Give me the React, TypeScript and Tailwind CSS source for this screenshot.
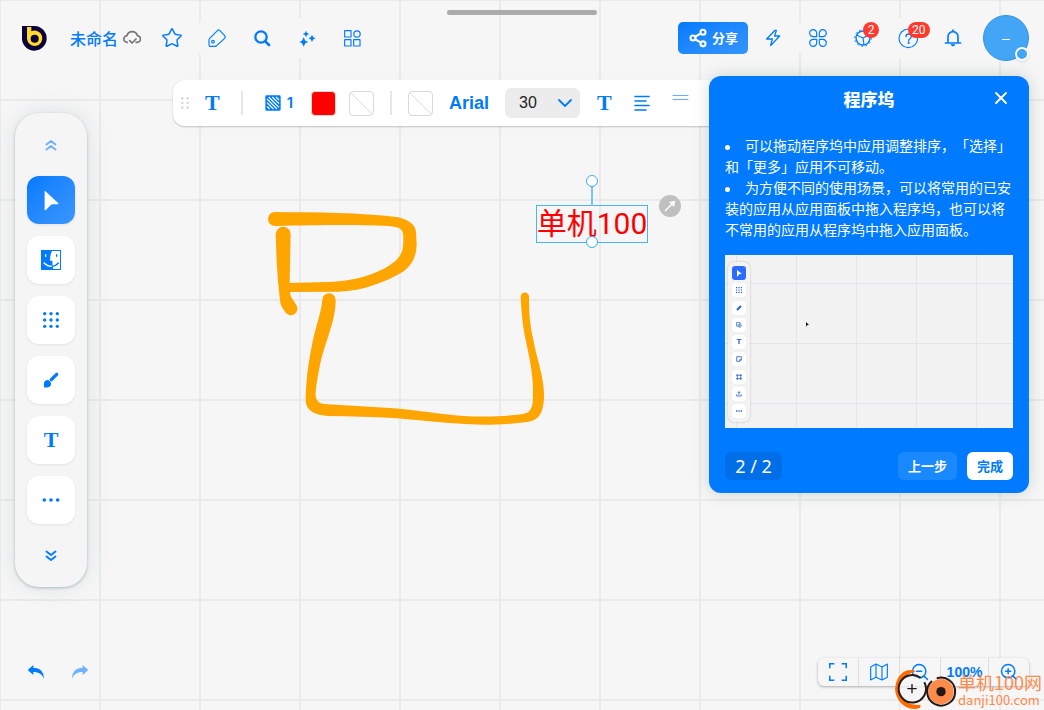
import type { ReactNode } from "react";
import { Share2, Star, X, ZoomIn, ZoomOut } from "lucide-react";

const GRID =
  "bg-[linear-gradient(90deg,#eaeaea_2px,transparent_2px),linear-gradient(#eaeaea_2px,transparent_2px)] bg-[size:100px_100px] bg-[position:-1px_-1px]";

const MINI_GRID =
  "bg-[linear-gradient(90deg,#e4e5e9_1px,transparent_1px),linear-gradient(#e4e5e9_1px,transparent_1px)] bg-[size:60px_60px] bg-[position:11px_28px]";

function Glyph({
  className,
  box = "0 0 54 54",
  width = 3.5,
  children,
}: {
  className: string;
  box?: string;
  width?: number;
  children: ReactNode;
}) {
  return (
    <svg
      className={className}
      viewBox={box}
      fill="none"
      stroke="currentColor"
      strokeWidth={width}
      strokeLinecap="round"
      strokeLinejoin="round"
      aria-hidden="true"
    >
      {children}
    </svg>
  );
}

function HeaderButton({
  label,
  badge,
  children,
}: {
  label: string;
  badge?: string;
  children: ReactNode;
}) {
  return (
    <button
      type="button"
      aria-label={label}
      className="relative flex size-10 items-center justify-center rounded-xl bg-[#f6f6f6]"
    >
      {children}
      {badge && (
        <span className="absolute top-1 left-5 flex h-4 min-w-4 items-center justify-center rounded-full bg-[#ff3b30] px-1 font-['Roboto',sans-serif] text-xs text-white">
          {badge}
        </span>
      )}
    </button>
  );
}

function Logo() {
  return (
    <svg className="size-[25px]" viewBox="0 0 75 75" aria-hidden="true">
      <path d="M0 0H38A37 37 0 1 1 0 38Z" fill="#0b0038" />
      <path d="M15 3H28V16A23 23 0 1 1 15 38Z" fill="#ffd92e" />
      <circle cx="38" cy="38" r="12" fill="#0b0038" />
    </svg>
  );
}

function Header() {
  return (
    <header className="flex h-[76px] shrink-0 items-center pr-[15px] pl-[22px]">
      <Logo />
      <span className="ml-[23px] text-base leading-6 font-medium">未命名</span>
      <Glyph className="ml-[5px] size-[18px] text-[#757575]" width={5}>
        <path d="M13 40a10 10 0 0 1-1-20A16 16 0 0 1 43 20a10 10 0 0 1-1 20h-3" />
        <path d="M20 35l7 7 12-12" />
      </Glyph>
      <nav className="ml-[11px] flex gap-[5px]" aria-label="画板">
        <HeaderButton label="收藏">
          <Star size={22} strokeWidth={1.6} />
        </HeaderButton>
        <HeaderButton label="标签">
          <Glyph className="size-[18px]">
            <path d="M29 4Q32 1 35 4L50 20Q53 24 50 28L26 50Q24 52 21 52H7Q3 52 3 48V33Q3 30 5 28Z" />
            <circle cx="15" cy="38" r="4" />
          </Glyph>
        </HeaderButton>
        <HeaderButton label="搜索">
          <Glyph className="size-[18px]" width={7}>
            <circle cx="24" cy="24" r="17" />
            <path d="M37 37L48 48" strokeWidth="8" />
          </Glyph>
        </HeaderButton>
        <HeaderButton label="智能">
          <svg className="size-[17px]" viewBox="0 0 51 51" fill="currentColor">
            <path d="M21 2l3 7 7 3-7 3-3 7-3-7-7-3 7-3z" />
            <path d="M39 15l4 7 7 3-7 3-4 8-4-8-7-3 7-3z" />
            <path d="M14 22l5 10 9 4-9 4-5 10-5-10-8-4 8-4z" />
          </svg>
        </HeaderButton>
        <HeaderButton label="应用">
          <Glyph className="size-[17px]" box="0 0 51 51" width={3.5}>
            <rect x="2" y="2" width="19" height="19" />
            <circle cx="39" cy="12" r="9.500" />
            <rect x="2" y="29" width="19" height="19" />
            <rect x="29" y="29" width="19" height="19" />
          </Glyph>
        </HeaderButton>
      </nav>

      <div className="ml-auto flex items-center gap-[5px]">
        <button
          type="button"
          className="flex h-8 w-[70px] items-center justify-center gap-1 rounded-[5px] bg-gradient-to-br from-[#007bff] to-[#3395ff] text-[13px] font-bold text-white"
        >
          <Share2 size={20} strokeWidth={2.5} />
          分享
        </button>
        <HeaderButton label="快捷操作">
          <Glyph className="size-[18px]" box="-4 0 54 54" width={4}>
            <path d="M29 4L4 30h17l-5 20 27-29H28l5-17z" />
          </Glyph>
        </HeaderButton>
        <HeaderButton label="插件">
          <Glyph className="size-[18px]" width={3.5}>
            <path d="M23 23H13a10.500 10.500 0 1 1 10-10zM31 23h10a10.500 10.500 0 1 0-10-10zM23 31H13a10.500 10.500 0 1 0 10 10zM31 31h10a10.500 10.500 0 1 1-10 10z" />
          </Glyph>
        </HeaderButton>
        <HeaderButton label="设置" badge="2">
          <Glyph className="size-[18px]" width={4}>
            <circle cx="27" cy="27" r="21" />
            <circle
              cx="27"
              cy="27"
              r="25"
              strokeWidth="3"
              strokeLinecap="butt"
              strokeDasharray="5 8.090"
            />
            <path d="M27 27L9 19M27 27l17-9M27 27l3 20" strokeWidth="3.500" />
          </Glyph>
        </HeaderButton>
        <HeaderButton label="帮助" badge="20">
          <Glyph className="size-[21px]" box="0 0 63 63">
            <circle cx="31" cy="31" r="28" />
            <path d="M24 26q0-8 8-8t8 7q0 5-5 8-3 2-3 6" strokeWidth="4" />
            <circle cx="32" cy="45" r="1.500" fill="currentColor" />
          </Glyph>
        </HeaderButton>
        <HeaderButton label="通知">
          <Glyph className="size-[18px]" width={5}>
            <path d="M12 42V23a15 15 0 0 1 30 0v19M4 42h46M27 3v5" />
            <path d="M21 46h12q-1 6-6 6t-6-6z" fill="currentColor" strokeWidth="1" />
          </Glyph>
        </HeaderButton>
        <button
          type="button"
          aria-label="账户"
          className="relative ml-[5px] flex size-[46px] items-center justify-center rounded-full border border-[#3a90da] bg-[#42a5f5] font-['Liberation_Sans',sans-serif] text-sm leading-none text-white"
        >
          –
          <span className="absolute -right-px -bottom-px size-3.5 rounded-full border-2 border-white bg-[#42a5f5] shadow" />
        </button>
      </div>
    </header>
  );
}

function DockTile({
  label,
  active,
  children,
}: {
  label: string;
  active?: boolean;
  children: ReactNode;
}) {
  return (
    <button
      type="button"
      aria-label={label}
      className={
        active
          ? "flex size-12 items-center justify-center rounded-xl bg-gradient-to-br from-[#007bff] to-[#3a96ff] text-white shadow-[0_1px_3px_rgba(0,0,0,0.08)]"
          : "flex size-12 items-center justify-center rounded-xl bg-white shadow-[0_1px_3px_rgba(0,0,0,0.08)]"
      }
    >
      {children}
    </button>
  );
}

function Dock() {
  return (
    <aside className="mt-[37px] ml-[15px] flex w-[72px] shrink-0 flex-col items-center self-start rounded-3xl bg-[#f5f5f5] shadow-[0_1px_3px_rgba(90,110,130,0.4),0_0_22px_rgba(90,110,130,0.16)]">
      <button
        type="button"
        aria-label="向上"
        className="flex h-[63px] w-full items-center justify-center opacity-55"
      >
        <Glyph className="size-3" box="0 0 12 12" width={1.8}>
          <path d="M1.500 5.500L6 2l4.500 3.500M1.500 10.500L6 7l4.500 3.500" />
        </Glyph>
      </button>
      <div className="flex flex-col gap-3">
        <DockTile label="选择" active>
          <svg className="h-[21px] w-[15px]" viewBox="0 0 48 66" fill="currentColor">
            <path d="M2 3Q2 0 5 3L45 41Q48 45 44 45H27Q24 45 22 47L6 63Q2 66 2 62Z" />
          </svg>
        </DockTile>
        <DockTile label="访达">
          <svg className="size-5" viewBox="0 0 60 60" fill="none">
            <rect x="1.500" y="1.500" width="57" height="57" stroke="currentColor" strokeWidth="3" />
            <path d="M0 0H34Q27 14 27 32H34Q34 46 37 60H0Z" fill="currentColor" />
            <path d="M14 14v5" stroke="white" strokeWidth="4" strokeLinecap="round" />
            <path d="M47 14v5" stroke="currentColor" strokeWidth="4" strokeLinecap="round" />
            <path d="M9 39Q20 50 34 49" stroke="white" strokeWidth="4" strokeLinecap="round" />
            <path d="M34 49Q45 48 52 39" stroke="currentColor" strokeWidth="4" strokeLinecap="round" />
          </svg>
        </DockTile>
        <DockTile label="全部应用">
          <svg className="size-4" viewBox="0 0 48 48" fill="currentColor">
            {[5, 24, 43].map((y) =>
              [5, 24, 43].map((x) => <circle key={`${x}-${y}`} cx={x} cy={y} r="5" />),
            )}
          </svg>
        </DockTile>
        <DockTile label="画笔">
          <svg className="size-4" viewBox="0 0 48 48" fill="currentColor">
            <path d="M41 7L25 23" stroke="currentColor" strokeWidth="10" strokeLinecap="round" />
            <path d="M3 46Q2 40 3 33a10 10 0 0 1 17-6l3 4a10 10 0 0 1-8 15Q8 47 3 46z" />
          </svg>
        </DockTile>
        <DockTile label="文本">
          <span className="font-['Liberation_Serif',serif] text-[22px] leading-6 font-bold">
            T
          </span>
        </DockTile>
        <DockTile label="更多">
          <svg className="h-1 w-[18px]" viewBox="0 0 54 12" fill="currentColor">
            <circle cx="7" cy="6" r="5.500" />
            <circle cx="27" cy="6" r="5.500" />
            <circle cx="47" cy="6" r="5.500" />
          </svg>
        </DockTile>
      </div>
      <button
        type="button"
        aria-label="向下"
        className="flex h-[63px] w-full items-center justify-center"
      >
        <Glyph className="size-3" box="0 0 12 12" width={1.8}>
          <path d="M1.500 1.500L6 5l4.500-3.500M1.500 6.500L6 10l4.500-3.500" />
        </Glyph>
      </button>
    </aside>
  );
}

function EmptySwatch({ label }: { label: string }) {
  return (
    <button
      type="button"
      aria-label={label}
      className="size-[25px] overflow-hidden rounded border border-[#d9d9d9] bg-white"
    >
      <svg className="size-full" viewBox="0 0 24 24" stroke="#dcdcdc">
        <path d="M0 0L24 24" />
      </svg>
    </button>
  );
}

function TextToolbar() {
  return (
    <div
      role="toolbar"
      aria-label="文本格式"
      className="mt-1 mr-6 ml-[86px] flex h-[46px] min-w-0 flex-1 items-center self-start rounded-xl bg-white pl-2 shadow-[0_1px_2px_rgba(0,0,0,0.22)]"
    >
      <svg className="h-3 w-2" viewBox="0 0 24 36" fill="#d2d2d2">
        {[4, 18, 32].map((y) =>
          [4, 20].map((x) => <circle key={`${x}-${y}`} cx={x} cy={y} r="3.500" />),
        )}
      </svg>
      <button
        type="button"
        aria-label="文本"
        className="ml-4 font-['Liberation_Serif',serif] text-[22px] leading-6 font-bold"
      >
        T
      </button>
      <span className="ml-[21px] h-6 w-0.5 bg-[#e6e6e6]" />
      <button
        type="button"
        aria-label="边框"
        className="ml-[22px] flex items-center gap-[6px] font-['Inter',sans-serif] text-[15px] font-semibold"
      >
        <svg className="size-4" viewBox="0 0 48 48" aria-hidden="true">
          <rect x="1" y="1" width="46" height="46" rx="4" fill="currentColor" />
          <path
            d="M6 34L14 42M6 23L25 42M6 12L36 42M11 6L42 37M22 6L42 26M33 6L42 15"
            stroke="white"
            strokeWidth="3.500"
          />
        </svg>
        1
      </button>
      <button
        type="button"
        aria-label="文字颜色"
        className="ml-[18px] size-[25px] rounded border border-[#d9d9d9] bg-[#ff0000]"
      />
      <span className="ml-[13px] flex">
        <EmptySwatch label="边框颜色" />
      </span>
      <span className="ml-4 h-6 w-0.5 bg-[#e6e6e6]" />
      <span className="ml-4 flex">
        <EmptySwatch label="背景颜色" />
      </span>
      <button
        type="button"
        className="ml-4 font-['Liberation_Sans',sans-serif] text-lg leading-6 font-bold"
      >
        Arial
      </button>
      <label className="relative ml-4 block">
        <select
          aria-label="字号"
          defaultValue="30"
          className="h-[30px] w-[75px] appearance-none rounded-md bg-[#ececec] pl-3.5 font-['Liberation_Sans',sans-serif] text-base text-[#222]"
        >
          <option>24</option>
          <option>30</option>
          <option>36</option>
        </select>
        <Glyph
          className="pointer-events-none absolute top-[10px] right-[7px] h-[10px] w-4"
          box="0 0 16 10"
          width={1.8}
        >
          <path d="M2 2l6 6 6-6" />
        </Glyph>
      </label>
      <button
        type="button"
        aria-label="加粗"
        className="ml-[17px] font-['Liberation_Serif',serif] text-[22px] leading-6 font-bold"
      >
        T
      </button>
      <button type="button" aria-label="对齐" className="ml-[22px]">
        <Glyph className="size-4" box="0 0 16 16" width={1.6}>
          <path d="M1 1.500h14M1 6h11M1 10.500h14M1 15h11" />
        </Glyph>
      </button>
      <button type="button" aria-label="行距" className="ml-[22px] self-start pt-[14px] opacity-60">
        <Glyph className="h-2 w-[17px]" box="0 0 17 8" width={1}>
          <path d="M1 1.500h15M1 5.500h15" />
        </Glyph>
      </button>
    </div>
  );
}

// Freehand strokes and the selected text box that live on the board.
function Board() {
  return (
    <div className="absolute inset-0 overflow-hidden">
      <svg
        className="absolute top-[165px] left-[250px] h-[270px] w-[450px]"
        viewBox="0 0 1350 810"
        fill="#ffa500"
      >
        <path d="M75 141C200 142 330 143 440 156C475 162 496 180 498 200L500 240Q499 290 462 318C410 350 340 378 265 380L110 381V354L235 351C320 348 400 322 440 284C462 262 460 240 460 215C460 192 450 186 415 183C300 178 200 181 75 183A21 21 0 0 1 75 141Z" />
        <path d="M77 208A22 22 0 0 1 122 208L119 350Q118 390 125 398L139 420A19 19 0 0 1 106 442Q90 420 90 405Q83 350 80 290Z" />
        <path d="M217 404A20 20 0 0 1 257 405C257 470 228 520 210 600C200 650 196 680 197 693Q200 715 222 717L420 729C500 735 570 748 640 753C710 757 770 753 815 748C845 744 849 725 849 690C850 620 836 570 826 520C816 470 814 430 812 395A12 12 0 0 1 837 395C837 450 840 480 850 525C862 590 884 640 882 700C880 745 865 767 835 770C780 778 740 779 700 779C600 777 500 765 440 760C370 755 300 754 235 753C190 751 165 735 167 700C170 620 178 580 190 520C202 470 214 440 217 404Z" />
      </svg>
      <div className="absolute top-[205px] left-[536px] flex h-[38px] w-[112px] items-center justify-center border border-[#4ab4fa] font-['Roboto','Noto_Sans_CJK_SC',sans-serif] text-[30px] leading-8 whitespace-nowrap text-[#ff0000]">
        单机100
        <span className="absolute -top-5 left-[54px] h-5 w-0.5 bg-[#76c6fa]" />
        <span className="absolute -top-[31px] left-[49px] size-3 rounded-full border-[1.5px] border-[#3aaaf8] bg-white" />
        <span className="absolute -bottom-[6px] left-[49px] size-3 rounded-full border-[1.5px] border-[#3aaaf8] bg-white" />
      </div>
      <button
        type="button"
        aria-label="连线"
        className="absolute top-[195px] left-[659px] flex size-[22px] items-center justify-center rounded-full bg-[#c0c0c0] text-white"
      >
        <svg className="size-3" viewBox="0 0 36 36" fill="currentColor">
          <path d="M3 33L24 12" stroke="currentColor" strokeWidth="4.500" />
          <path d="M34 2L30 21 15 6z" />
        </svg>
      </button>
    </div>
  );
}

const MINI_TOOLS: { id: string; art: ReactNode }[] = [
  {
    id: "apps",
    art: (
      <path d="M0 1h9M0 4.500h9M0 8h9" strokeWidth="1.800" strokeDasharray="1.800 1.800" />
    ),
  },
  { id: "pen", art: <path d="M1.500 7.500L7.500 1.500" strokeWidth="3" /> },
  {
    id: "shape",
    art: (
      <>
        <rect x="1" y="1" width="5" height="5" />
        <circle cx="5.500" cy="5.500" r="2.500" />
      </>
    ),
  },
  { id: "text", art: null },
  { id: "note", art: <path d="M1 1h7v5L6 8H1zM5.500 8V5.500H8" strokeWidth="1.200" /> },
  { id: "frame", art: <path d="M2 0v9M7 0v9M0 2h9M0 7h9" strokeWidth="1.200" /> },
  { id: "upload", art: <path d="M4.500 6V1M2.500 3l2-2 2 2M1 5v2.500h7V5" strokeWidth="1.200" /> },
  { id: "more", art: <path d="M0 4.500h9" strokeWidth="2" strokeDasharray="2 1.500" /> },
];

function Preview() {
  return (
    <div className={`relative mt-[15px] h-[173px] bg-[#f2f2f2] pt-[7px] pl-[3px] ${MINI_GRID}`}>
      <div className="flex h-[160px] w-[22px] flex-col items-center justify-between rounded-md bg-[#f3f3f4] py-1 shadow-[0_0_2px_rgba(0,0,0,0.25)]">
        <span className="flex size-3.5 items-center justify-center rounded-[3px] bg-[#2b6bff] text-white">
          <svg className="h-[7px] w-[5px]" viewBox="0 0 5 7" fill="currentColor">
            <path d="M0 0l5 4H2.500L0 7z" />
          </svg>
        </span>
        {MINI_TOOLS.map((tool) => (
          <span
            key={tool.id}
            className="flex size-3.5 items-center justify-center rounded-[3px] bg-white text-[#2566c8] shadow-[0_0_1px_rgba(0,0,0,0.1)]"
          >
            {tool.art ? (
              <svg
                className="size-[6px]"
                viewBox="0 0 9 9"
                fill="none"
                stroke="currentColor"
                strokeWidth="1"
              >
                {tool.art}
              </svg>
            ) : (
              <span className="font-['Liberation_Sans',sans-serif] text-[8px] leading-none font-bold">
                T
              </span>
            )}
          </span>
        ))}
      </div>
      <svg className="absolute top-[67px] left-[81px] h-[5px] w-[3px]" viewBox="0 0 3 5" fill="#000">
        <path d="M0 0l3 3H1L0 5z" />
      </svg>
    </div>
  );
}

const TIPS = [
  "可以拖动程序坞中应用调整排序，「选择」和「更多」应用不可移动。",
  "为方便不同的使用场景，可以将常用的已安装的应用从应用面板中拖入程序坞，也可以将不常用的应用从程序坞中拖入应用面板。",
];

function TourPanel() {
  return (
    <section
      aria-label="程序坞"
      className="absolute top-[76px] right-[15px] w-[320px] rounded-xl bg-[#007bff] px-4 pb-[13px] text-white shadow-[0_0_16px_rgba(60,80,100,0.22)]"
    >
      <div className="relative flex h-[46px] items-center justify-center">
        <h2 className="text-[17px] leading-6 font-black">程序坞</h2>
        <button type="button" aria-label="关闭" className="absolute top-3 right-0.5">
          <X size={20} strokeWidth={2.2} />
        </button>
      </div>
      <ul className="mt-[13px] text-sm leading-[21px] [text-spacing-trim:space-all]">
        {TIPS.map((tip) => (
          <li key={tip}>
            <span className="mr-[15px] inline-block size-[5px] rounded-full bg-white align-middle" />
            {tip}
          </li>
        ))}
      </ul>
      <Preview />
      <div className="mt-6 flex items-center text-[13px] font-bold">
        <span className="flex h-7 w-[57px] items-center justify-center rounded-md bg-[#006ee6] font-['Noto_Sans',sans-serif] text-lg font-normal">
          2 / 2
        </span>
        <button type="button" className="ml-auto h-7 w-[59px] rounded-md bg-[#1a88ff]">
          上一步
        </button>
        <button
          type="button"
          className="ml-[10px] h-7 w-[46px] rounded-md bg-white text-[#007bff]"
        >
          完成
        </button>
      </div>
    </section>
  );
}

function Footer() {
  return (
    <footer className="mt-auto flex items-center justify-between pr-[15px] pb-[18px] pl-4">
      <div className="flex gap-1">
        <button type="button" aria-label="撤销" className="flex size-10 items-center justify-center">
          <svg className="h-4 w-[18px]" viewBox="0 0 54 48" fill="currentColor">
            <path d="M2 18L19 3v8C38 11 51 22 51 45C46 31 36 24 19 24v9z" />
          </svg>
        </button>
        <button
          type="button"
          aria-label="重做"
          className="flex size-10 items-center justify-center opacity-55"
        >
          <svg className="h-4 w-[18px]" viewBox="0 0 54 48" fill="currentColor">
            <path d="M52 18L35 3v8C16 11 3 22 3 45C8 31 18 24 35 24v9z" />
          </svg>
        </button>
      </div>
      <div className="flex h-7 divide-x divide-[#dedede] rounded-md bg-[#f6f6f6] shadow-[0_1px_3px_rgba(0,0,0,0.3)]">
        <button type="button" aria-label="全屏" className="flex w-[41px] items-center justify-center">
          <Glyph className="size-[18px]" width={5}>
            <path
              d="M2 16V2h14M38 2h14v14M52 38v14H38M16 52H2V38"
              strokeLinecap="butt"
              strokeLinejoin="miter"
            />
          </Glyph>
        </button>
        <button type="button" aria-label="地图" className="flex w-[41px] items-center justify-center">
          <Glyph className="size-[18px]">
            <path d="M2 12L18 3 36 12 52 3V43L36 51 18 43 2 51ZM18 3V43M36 12V51" />
          </Glyph>
        </button>
        <button type="button" aria-label="缩小" className="flex w-[41px] items-center justify-center">
          <ZoomOut size={20} strokeWidth={1.8} />
        </button>
        <button
          type="button"
          className="w-12 font-['Liberation_Sans',sans-serif] text-sm font-bold"
        >
          100%
        </button>
        <button type="button" aria-label="放大" className="flex w-10 items-center justify-center">
          <ZoomIn size={20} strokeWidth={1.8} />
        </button>
      </div>
    </footer>
  );
}

function SiteMark() {
  return (
    <div className="pointer-events-none absolute right-0.5 bottom-0 flex items-center text-[#ff8b4a]">
      <svg className="h-[42px] w-16" viewBox="0 0 192 126" fill="none" aria-hidden="true">
        <path
          d="M66 10Q34 -4 12 30Q-8 68 18 102Q42 130 78 120L80 110Q50 114 30 96Q6 70 22 40Q36 18 66 10Z"
          fill="#ff6a00"
        />
        <circle cx="54" cy="62" r="40" fill="#f6f6f6" fillOpacity="0.7" />
        <path
          d="M91 43A41 41 0 1 1 80 30"
          stroke="#231815"
          strokeWidth="6"
        />
        <path d="M54 48v28M40 62h28" stroke="#231815" strokeWidth="4" />
        <circle cx="141" cy="71" r="38" fill="#ff8b4a" />
        <path d="M128 31A42 42 0 1 1 114 39" stroke="#231815" strokeWidth="6" />
        <circle cx="141" cy="71" r="14" fill="#231815" />
      </svg>
      <div className="pt-1 whitespace-nowrap">
        <div className="text-lg leading-[18px]">单机100网</div>
        <div className="text-[13px] leading-[18px]">danji100.com</div>
      </div>
    </div>
  );
}

export default function App() {
  return (
    <div
      className={`relative flex min-h-screen flex-col overflow-hidden bg-[#f6f6f6] font-['Noto_Sans_CJK_SC',sans-serif] text-[#007bff] ${GRID}`}
    >
      <Board />
      <div className="absolute top-[10px] left-1/2 h-[5px] w-[150px] -translate-x-1/2 rounded-full bg-[#ababab]" />
      <div className="relative flex flex-1 flex-col">
        <Header />
        <div className="flex">
          <Dock />
          <TextToolbar />
        </div>
        <Footer />
      </div>
      <TourPanel />
      <SiteMark />
    </div>
  );
}
